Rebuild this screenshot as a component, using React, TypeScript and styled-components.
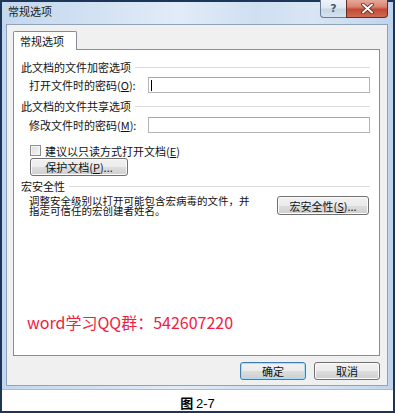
import React from "react";
import styled, { createGlobalStyle } from "styled-components";

const GlobalStyle = createGlobalStyle`
  html, body { margin: 0; padding: 0; background: #ffffff; }
  body { width: 395px; height: 413px; overflow: hidden; }
  * { box-sizing: border-box; }
`;

const CJK = `"Noto Sans CJK SC", "Noto Sans", sans-serif`;

const Page = styled.div`
  width: 395px;
  height: 413px;
  border: 2px solid #1b3658;
  background: #ffffff;
  display: flex;
  flex-direction: column;
  font-family: ${CJK};
  color: #111;
`;

const Frame = styled.div`
  height: 388px;
  padding: 0 5px 3px 4px;
  background: linear-gradient(90deg, #c3d7ed 0%, #d3e2f3 25%, #e2ecf8 45%, #cfdff1 65%, #d8e5f4 80%, #bfd4eb 100%);
  border-bottom: 1px solid #a9bdd6;
  display: flex;
  flex-direction: column;
`;

const TitleBar = styled.div`
  height: 23px;
  display: flex;
  justify-content: space-between;
  align-items: flex-start;
`;

const TitleText = styled.div`
  padding-left: 2px;
  font-size: 11px;
  line-height: 18px;
  color: #1a1a1a;
`;

const CaptionButtons = styled.div`
  display: flex;
  margin-top: -2px;
`;

const HelpButton = styled.div`
  width: 26px;
  height: 18px;
  border: 1px solid #6c7d93;
  border-top: none;
  border-right: none;
  border-radius: 0 0 0 4px;
  background: linear-gradient(#eef3f9 0%, #dfe8f2 45%, #c8d6e6 55%, #d6e2ef 100%);
  display: flex;
  align-items: center;
  justify-content: center;
  font-family: "DejaVu Sans", sans-serif;
  font-size: 11px;
  font-weight: bold;
  color: #4c5a6c;
`;

const CloseButton = styled.div`
  width: 42px;
  height: 18px;
  border: 1px solid #6b2a22;
  border-top: none;
  border-radius: 0 0 4px 0;
  background: linear-gradient(#e7a899 0%, #d98373 40%, #c24a33 55%, #cf6a52 100%);
  display: flex;
  align-items: center;
  justify-content: center;
`;

const Client = styled.div`
  height: 362px;
  border: 1px solid #8fa3bb;
  background: #f0f0f0;
  padding: 6px 7px 5px 6px;
  display: flex;
  flex-direction: column;
`;

const Tab = styled.div`
  width: 64px;
  height: 19px;
  margin-bottom: -1px;
  position: relative;
  z-index: 1;
  background: #ffffff;
  border: 1px solid #898c95;
  border-bottom: none;
  border-radius: 2px 2px 0 0;
  font-size: 11px;
  line-height: 18px;
  padding-left: 6px;
`;

const Panel = styled.div`
  height: 307px;
  background: #ffffff;
  border: 1px solid #898c95;
  padding: 10px 9px 0 7px;
  display: flex;
  flex-direction: column;
`;

const SectionHeader = styled.div<{ $gap: number }>`
  margin-top: ${(p) => p.$gap}px;
  height: 14px;
  display: flex;
  align-items: center;
  gap: 4px;
  font-size: 11px;
  line-height: 14px;
  white-space: nowrap;
`;

const Rule = styled.div`
  flex: 1;
  height: 1px;
  background: #dcdcdc;
`;

const FieldRow = styled.div<{ $gap: number }>`
  margin-top: ${(p) => p.$gap}px;
  height: 16px;
  display: flex;
  align-items: center;
`;

const Label = styled.div`
  width: 127px;
  padding-left: 8px;
  font-size: 11px;
  white-space: nowrap;
`;

const TextBox = styled.div`
  flex: 1;
  height: 16px;
  border: 1px solid #b5b5b5;
  border-top-color: #a5a5a5;
  background: #ffffff;
  display: flex;
  align-items: center;
  padding-left: 2px;
`;

const Caret = styled.span`
  width: 1px;
  height: 11px;
  background: #000;
`;

const U = styled.span`
  text-decoration: underline;
`;

const CheckRow = styled.div`
  margin-top: 11px;
  margin-left: 9px;
  height: 13px;
  display: flex;
  align-items: center;
  gap: 4px;
  font-size: 11px;
  white-space: nowrap;
`;

const CheckBox = styled.span`
  width: 11px;
  height: 11px;
  border: 1px solid #8e8f8f;
  background: linear-gradient(135deg, #dcdcdc, #f6f6f6);
  box-shadow: inset 0 0 0 1px #f4f4f4;
`;

const Button = styled.div<{ $w: number; $h?: number; $default?: boolean }>`
  width: ${(p) => p.$w}px;
  height: ${(p) => p.$h ?? 18}px;
  border: 1px solid ${(p) => (p.$default ? "#3c7fb1" : "#707070")};
  border-radius: 3px;
  background: linear-gradient(#f2f2f2 0%, #ebebeb 50%, #dddddd 51%, #cfcfcf 100%);
  box-shadow: inset 0 0 0 1px ${(p) => (p.$default ? "#a9dcf6" : "#fbfbfb")};
  display: flex;
  align-items: center;
  justify-content: center;
  font-size: 11px;
  white-space: nowrap;
  color: #111;
`;

const ProtectButton = styled(Button)`
  margin-top: 1px;
  margin-left: 9px;
`;

const MacroRow = styled.div`
  margin-top: 3px;
  display: flex;
  justify-content: space-between;
  align-items: flex-start;
`;

const Description = styled.div`
  padding-left: 8px;
  font-size: 10.5px;
  line-height: 10px;
  white-space: nowrap;
`;

const MacroButton = styled(Button)`
  margin-right: 1px;
`;

const Promo = styled.div`
  margin-top: 96px;
  margin-left: 6px;
  font-family: "Noto Sans CJK SC", "Open Sans", sans-serif;
  font-size: 16px;
  line-height: 20px;
  color: #f0213f;
  white-space: nowrap;
`;

const ButtonRow = styled.div`
  margin-top: 6px;
  display: flex;
  justify-content: flex-end;
  gap: 8px;
`;

const Caption = styled.div`
  flex: 1;
  padding-top: 5px;
  text-align: center;
  font-size: 13px;
  line-height: 15px;
  color: #000;
`;

const FigGlyph = styled.span`
  font-family: ${CJK};
  font-weight: 700;
`;

const FigNum = styled.span`
  font-family: "Liberation Sans", sans-serif;
`;

export default function App() {
  return (
    <>
      <GlobalStyle />
      <Page>
        <Frame>
          <TitleBar>
            <TitleText>常规选项</TitleText>
            <CaptionButtons>
              <HelpButton>?</HelpButton>
              <CloseButton>
                <svg width="13" height="11" viewBox="0 0 13 11">
                  <path d="M2 1.5 L11 9.5 M11 1.5 L2 9.5" stroke="#5a1a12" strokeWidth="3.6" strokeLinecap="round" />
                  <path d="M2 1.5 L11 9.5 M11 1.5 L2 9.5" stroke="#ffffff" strokeWidth="2" strokeLinecap="round" />
                </svg>
              </CloseButton>
            </CaptionButtons>
          </TitleBar>
          <Client>
            <Tab>常规选项</Tab>
            <Panel>
              <SectionHeader $gap={0}>
                此文档的文件加密选项
                <Rule />
              </SectionHeader>
              <FieldRow $gap={3}>
                <Label>
                  打开文件时的密码(<U>O</U>):
                </Label>
                <TextBox>
                  <Caret />
                </TextBox>
              </FieldRow>
              <SectionHeader $gap={6}>
                此文档的文件共享选项
                <Rule />
              </SectionHeader>
              <FieldRow $gap={4}>
                <Label>
                  修改文件时的密码(<U>M</U>):
                </Label>
                <TextBox />
              </FieldRow>
              <CheckRow>
                <CheckBox />
                <span>
                  建议以只读方式打开文档(<U>E</U>)
                </span>
              </CheckRow>
              <ProtectButton $w={98}>
                保护文档(<U>P</U>)...
              </ProtectButton>
              <SectionHeader $gap={3}>
                宏安全性
                <Rule />
              </SectionHeader>
              <MacroRow>
                <Description>
                  调整安全级别以打开可能包含宏病毒的文件，并
                  <br />
                  指定可信任的宏创建者姓名。
                </Description>
                <MacroButton $w={92} $h={19}>
                  宏安全性(<U>S</U>)...
                </MacroButton>
              </MacroRow>
              <Promo>word学习QQ群：542607220</Promo>
            </Panel>
            <ButtonRow>
              <Button $w={66} $default>
                确定
              </Button>
              <Button $w={66}>取消</Button>
            </ButtonRow>
          </Client>
        </Frame>
        <Caption>
          <FigGlyph>图</FigGlyph> <FigNum>2-7</FigNum>
        </Caption>
      </Page>
    </>
  );
}
